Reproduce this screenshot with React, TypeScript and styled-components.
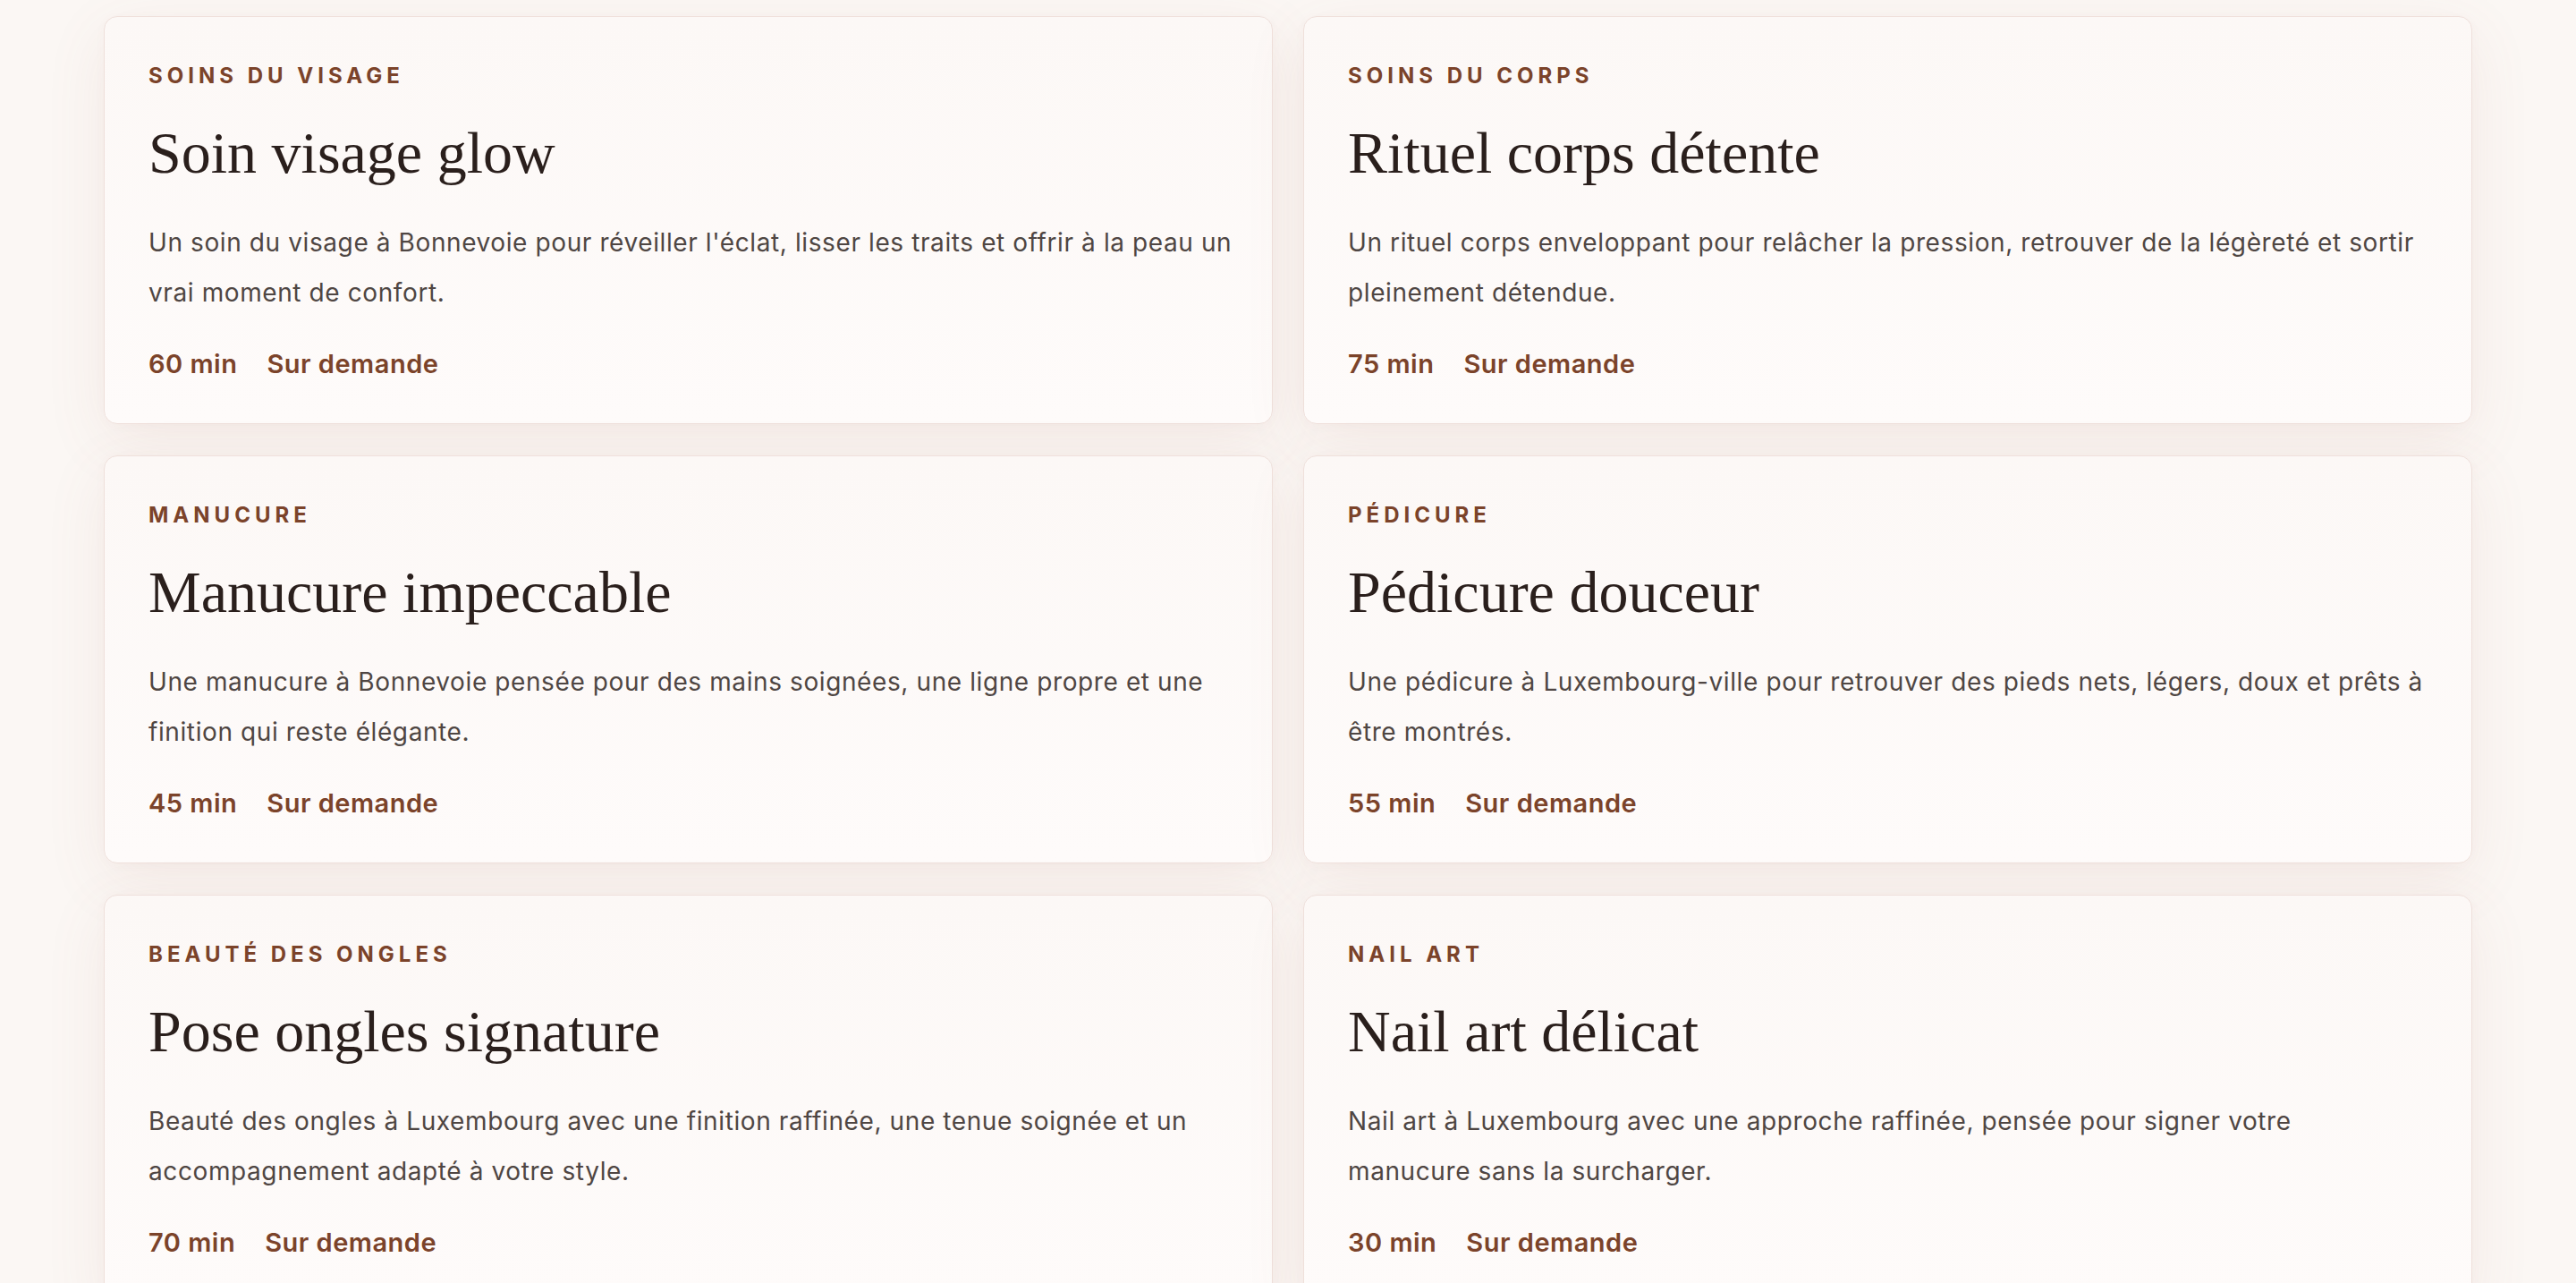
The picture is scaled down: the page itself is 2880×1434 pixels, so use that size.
import styled, { createGlobalStyle } from 'styled-components'

interface Service {
    category: string
    title: string
    lines: string[]
    duration: string
    price: string
}

// descriptions are kept split the way the cards break them
const services: Service[] = [
    {
        category: 'Soins du visage',
        title: 'Soin visage glow',
        lines: [
            "Un soin du visage à Bonnevoie pour réveiller l'éclat, lisser les traits et offrir à la peau un",
            'vrai moment de confort.',
        ],
        duration: '60 min',
        price: 'Sur demande',
    },
    {
        category: 'Soins du corps',
        title: 'Rituel corps détente',
        lines: [
            'Un rituel corps enveloppant pour relâcher la pression, retrouver de la légèreté et sortir',
            'pleinement détendue.',
        ],
        duration: '75 min',
        price: 'Sur demande',
    },
    {
        category: 'Manucure',
        title: 'Manucure impeccable',
        lines: [
            'Une manucure à Bonnevoie pensée pour des mains soignées, une ligne propre et une',
            'finition qui reste élégante.',
        ],
        duration: '45 min',
        price: 'Sur demande',
    },
    {
        category: 'Pédicure',
        title: 'Pédicure douceur',
        lines: [
            'Une pédicure à Luxembourg-ville pour retrouver des pieds nets, légers, doux et prêts à',
            'être montrés.',
        ],
        duration: '55 min',
        price: 'Sur demande',
    },
    {
        category: 'Beauté des ongles',
        title: 'Pose ongles signature',
        lines: [
            'Beauté des ongles à Luxembourg avec une finition raffinée, une tenue soignée et un',
            'accompagnement adapté à votre style.',
        ],
        duration: '70 min',
        price: 'Sur demande',
    },
    {
        category: 'Nail art',
        title: 'Nail art délicat',
        lines: [
            'Nail art à Luxembourg avec une approche raffinée, pensée pour signer votre',
            'manucure sans la surcharger.',
        ],
        duration: '30 min',
        price: 'Sur demande',
    },
]

export default function App() {
    return (
        <>
            <GlobalStyle />
            <Page>
                <ServiceGrid>
                    {services.map((service) => (
                        <ServiceCard key={service.title}>
                            <Category>{service.category}</Category>
                            <Title>{service.title}</Title>
                            <Description>
                                {service.lines.map((line, i) => (
                                    <span key={i}>{line}</span>
                                ))}
                            </Description>
                            <Meta>
                                <span>{service.duration}</span>
                                <span>{service.price}</span>
                            </Meta>
                        </ServiceCard>
                    ))}
                </ServiceGrid>
            </Page>
        </>
    )
}

const GlobalStyle = createGlobalStyle`
    html, body {
        margin: 0;
        padding: 0;
        background: #fbf7f4;
    }

    body {
        font-family: 'Inter', 'Liberation Sans', sans-serif;
        -webkit-font-smoothing: antialiased;
    }
`

const Page = styled.main`
    height: 1434px;
    overflow: hidden;
    padding-top: 18px;
    box-sizing: border-box;
    background: #fbf7f4;
`

const ServiceGrid = styled.section`
    width: 2648px;
    margin: 0 auto;
    display: grid;
    grid-template-columns: repeat(2, minmax(0, 1fr));
    column-gap: 34px;
    row-gap: 35px;
`

const ServiceCard = styled.article`
    display: flex;
    flex-direction: column;
    min-width: 0;
    padding: 54px 49px 52px;
    border: 1px solid #efe0db;
    border-radius: 15px;
    background: linear-gradient(180deg, #fcf8f6 0%, #fefbfa 100%);
    box-shadow: 0 20px 70px rgba(165, 105, 85, 0.09),
        0 2px 12px rgba(165, 105, 85, 0.03);
`

const Category = styled.div`
    font-family: 'Inter', sans-serif;
    font-size: 24px;
    line-height: 24px;
    font-weight: 700;
    letter-spacing: 5px;
    text-transform: uppercase;
    color: #7b432a;
`

const Title = styled.h3`
    margin: 38px 0 0;
    font-family: 'Liberation Serif', 'DejaVu Serif', serif;
    font-size: 66px;
    line-height: 72px;
    font-weight: 400;
    color: #2a1f1c;
`

const Description = styled.p`
    margin: 36px 0 0;
    display: flex;
    flex-direction: column;
    font-family: 'Inter', sans-serif;
    font-size: 28px;
    line-height: 56px;
    font-weight: 400;
    letter-spacing: 0.6px;
    color: #4f4643;

    span {
        white-space: nowrap;
    }
`

const Meta = styled.div`
    display: flex;
    gap: 33px;
    margin-top: 38px;
    font-family: 'Inter', sans-serif;
    font-size: 29px;
    line-height: 28px;
    font-weight: 600;
    letter-spacing: 0.5px;
    color: #7b432a;
`
